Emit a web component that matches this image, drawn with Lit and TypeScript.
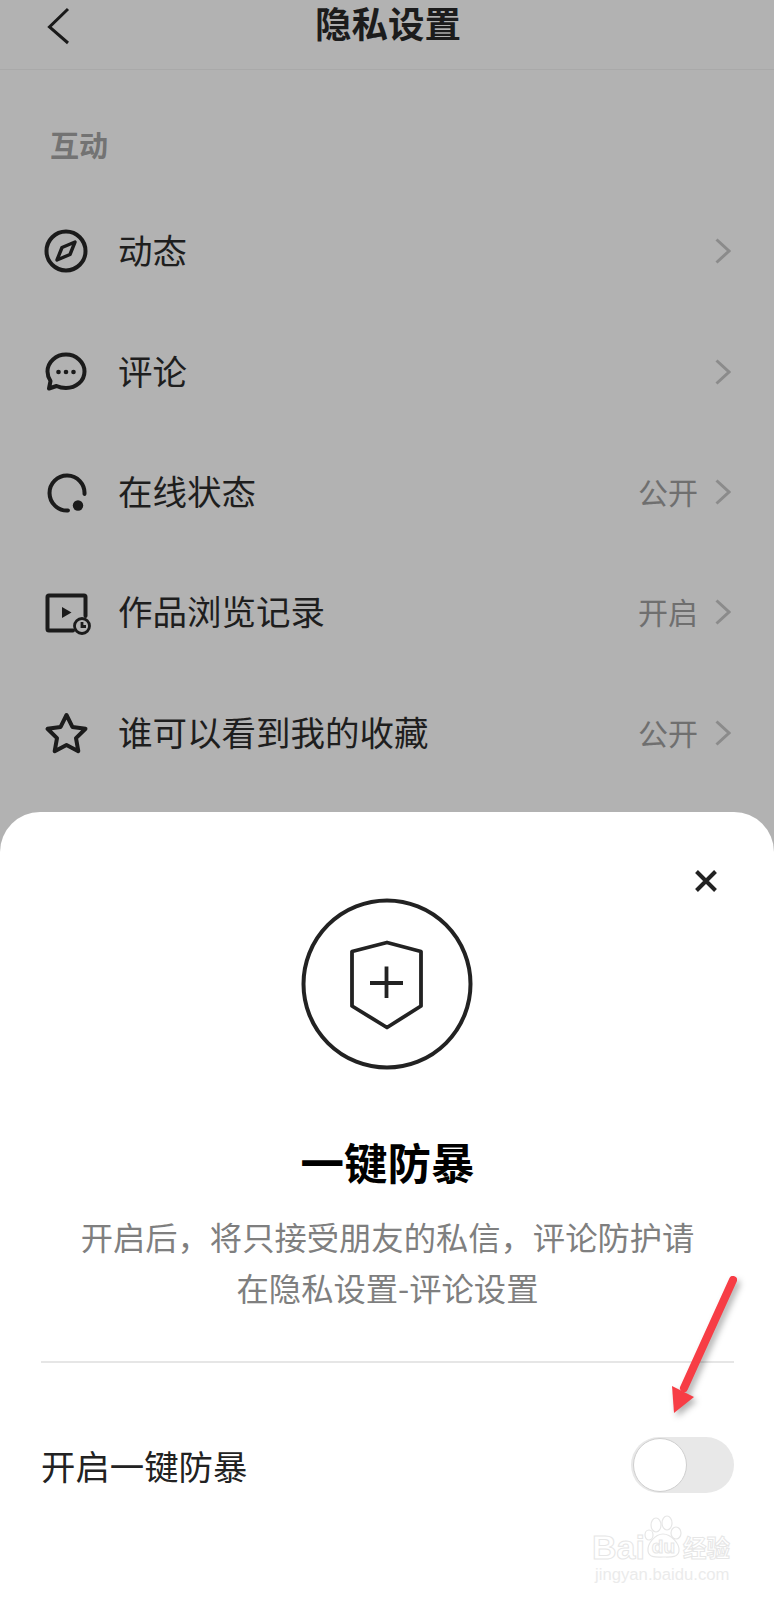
import { LitElement, html, css, svg } from "lit";
import { customElement } from "lit/decorators.js";

const chevron = html`<svg class="chev" viewBox="0 0 16 26"><path d="M1.5 1.5 L14 13 L1.5 24.5" /></svg>`;

const icons = {
  compass: svg`<circle cx="22" cy="22" r="19.5" class="s"/><path d="M31 13 L26 25.5 L13 31 L18 18.5 Z" class="s t"/>`,
  comment: svg`<path class="s" d="M22 4.5 C32 4.5 40.5 12 40.5 21.5 C40.5 31 32 38 22 38 C18.5 38 15 37.2 12.5 36 L5 38.5 L6.5 31 C4.5 28 3.5 25 3.5 21.5 C3.5 12 12 4.5 22 4.5 Z"/><circle cx="14.5" cy="22" r="2.3"/><circle cx="22" cy="22" r="2.3"/><circle cx="29.5" cy="22" r="2.3"/>`,
  status: svg`<path class="s" d="M24 40.5 A17.5 17.5 0 1 1 40.5 24"/><circle cx="34" cy="35.5" r="5.2"/>`,
  video: svg`<path class="s" d="M29 40.5 H5 a1.5 1.5 0 0 1 -1.5 -1.5 V7 a1.5 1.5 0 0 1 1.5 -1.5 H40 a1.5 1.5 0 0 1 1.5 1.5 V26"/><path d="M18 17 L27.5 22.5 L18 28 Z"/><circle class="t2" cx="38" cy="36" r="7.5"/><path class="t2" d="M38 32 V36.5 H42"/>`,
  star: svg`<path class="s" d="M22.5 4 L28.4 15.9 L41.5 17.8 L32 27.1 L34.3 40.2 L22.5 34 L10.7 40.2 L13 27.1 L3.5 17.8 L16.6 15.9 Z"/>`,
};

const rows: { icon: keyof typeof icons; label: string; value?: string }[] = [
  { icon: "compass", label: "动态" },
  { icon: "comment", label: "评论" },
  { icon: "status", label: "在线状态", value: "公开" },
  { icon: "video", label: "作品浏览记录", value: "开启" },
  { icon: "star", label: "谁可以看到我的收藏", value: "公开" },
];

@customElement("app-root")
export class AppRoot extends LitElement {
  static styles = css`
    :host {
      display: block;
      position: relative;
      width: 774px;
      height: 1600px;
      overflow: hidden;
      background: #b2b2b2;
      font-family: "Noto Sans CJK SC", "Noto Sans", sans-serif;
    }
    .back-layer { height: 812px; }
    .top {
      height: 69px;
      border-bottom: 1px solid #a9a9a9;
      display: flex;
      align-items: flex-start;
      padding-left: 47px;
    }
    .back { width: 24px; height: 38px; margin-top: 7px; flex: none; }
    .back path { fill: none; stroke: #1a1a1a; stroke-width: 3; }
    .title {
      flex: none;
      margin-left: 244px;
      font-size: 36.5px;
      line-height: 46px;
      font-weight: 700;
      color: #1c1c1c;
    }
    .section {
      margin: 54px 0 0 50px;
      height: 40px;
      line-height: 40px;
      font-size: 29px;
      font-weight: 700;
      color: #737373;
    }
    .list { margin-top: 27px; }
    .row {
      height: 120.4px;
      display: flex;
      align-items: center;
      padding: 0 43px 0 44px;
    }
    .ic { width: 44px; height: 44px; flex: none; overflow: visible; fill: #1b1b1b; }
    .ic .s { fill: none; stroke: #1b1b1b; stroke-width: 4; stroke-linejoin: round; stroke-linecap: round; }
    .ic .t { stroke-width: 3.4; }
    .ic .t2 { fill: none; stroke: #1b1b1b; stroke-width: 2.8; }
    .label {
      margin: 0 0 4px 30px;
      flex: 1;
      font-size: 34.5px;
      line-height: 44px;
      color: #1e1e1e;
    }
    .value { font-size: 30px; line-height: 40px; color: #6f6f6f; margin: 0 17px 2px 0; }
    .chev { width: 16px; height: 26px; flex: none; }
    .chev path { fill: none; stroke: #8b8b8b; stroke-width: 3; }
    .sheet {
      height: 788px;
      box-sizing: border-box;
      background: #fff;
      border-radius: 40px 40px 0 0;
      padding: 57px 40px 0 41px;
      display: flex;
      flex-direction: column;
    }
    .close-row { display: flex; justify-content: flex-end; padding-right: 16px; }
    .close { width: 24px; height: 24px; flex: none; }
    .close path { fill: none; stroke: #222; stroke-width: 4; }
    .shield { width: 172px; height: 172px; flex: none; align-self: center; margin-top: 5px; margin-right: 1px; }
    .shield * { fill: none; stroke: #222; }
    .sheet h2 {
      margin: 64px 0 0;
      text-align: center;
      font-size: 43.5px;
      line-height: 56px;
      font-weight: 700;
      color: #000;
    }
    .desc {
      margin: 21px 0 0;
      text-align: center;
      font-size: 32.3px;
      line-height: 51px;
      color: #7f7f7f;
    }
    .rule { height: 2px; background: #e6e6e6; margin-top: 48px; }
    .switch-row { display: flex; align-items: center; justify-content: space-between; margin-top: 74px; }
    .switch-label { font-size: 34.4px; line-height: 56px; color: #222; }
    .toggle {
      width: 103px;
      height: 56px;
      box-sizing: border-box;
      padding: 1px 2px;
      border-radius: 28px;
      background: #e8e8e8;
      flex: none;
    }
    .thumb {
      width: 54px;
      height: 54px;
      box-sizing: border-box;
      border-radius: 50%;
      background: #fff;
      border: 1px solid #cfcfcf;
    }
    .arrow { position: absolute; left: 660px; top: 1270px; width: 90px; height: 160px; overflow: visible; filter: drop-shadow(3px 4px 3px rgba(0,0,0,.3)); }
    .arrow path { fill: #f73d45; }
    .arrow .shaft { fill: none; stroke: #f73d45; stroke-width: 8; stroke-linecap: round; }
    .mark { position: absolute; left: 592px; top: 1529px; width: 146px; }
    .mark .big { position: relative; display: flex; align-items: center; white-space: nowrap; font-family: "Liberation Sans", sans-serif; font-size: 34px; line-height: 36px; font-weight: 700; color: transparent; -webkit-text-stroke: 1px #e6e6e6; }
    .mark .cn { font-family: "Noto Sans CJK SC", sans-serif; font-size: 23.5px; margin-left: 4px; }
    .mark .du { font-size: 19px; margin-left: 3px; width: 31px; text-align: center; }
    .mark .small { margin-left: 3px; font-family: "Liberation Sans", sans-serif; font-size: 16.7px; line-height: 20px; color: #ebebeb; white-space: nowrap; }
    .paw { position: absolute; left: 52px; top: -13px; width: 40px; height: 44px; overflow: visible; }
    .paw * { fill: #fff; stroke: #e6e6e6; stroke-width: 1.2; }
  `;

  render() {
    return html`
      <div class="back-layer">
        <div class="top">
          <svg class="back" viewBox="0 0 24 38"><path d="M21 2 L2.5 20 L21 36" /></svg>
          <div class="title">隐私设置</div>
        </div>
        <div class="section">互动</div>
        <div class="list">
          ${rows.map(
            (r) => html`<div class="row">
              <svg class="ic" viewBox="0 0 44 44">${icons[r.icon]}</svg>
              <div class="label">${r.label}</div>
              ${r.value ? html`<div class="value">${r.value}</div>` : ""}
              ${chevron}
            </div>`
          )}
        </div>
      </div>
      <div class="sheet">
        <div class="close-row">
          <svg class="close" viewBox="0 0 24 24"><path d="M2.5 2.5 L21.5 21.5 M21.5 2.5 L2.5 21.5" /></svg>
        </div>
        <svg class="shield" viewBox="0 0 172 172">
          <circle cx="86" cy="86" r="83.5" stroke-width="4" />
          <path stroke-width="3.8" stroke-linejoin="round" d="M86 44.5 L120 53.5 V108 L86 129.5 L51 108 V53.5 Z" />
          <path stroke-width="3.8" d="M69 85 H102 M85.5 68.5 V100" />
        </svg>
        <h2>一键防暴</h2>
        <p class="desc">开启后，将只接受朋友的私信，评论防护请<br />在隐私设置-评论设置</p>
        <div class="rule"></div>
        <div class="switch-row">
          <div class="switch-label">开启一键防暴</div>
          <div class="toggle"><div class="thumb"></div></div>
        </div>
      </div>
      <svg class="arrow" viewBox="0 0 90 160">
        <path class="shaft" d="M73 10 L24 118" />
        <path d="M14 143 L12 116 L34 127 Z" />
      </svg>
      <div class="mark">
        <svg class="paw" viewBox="0 0 40 44">
          <ellipse cx="5" cy="19" rx="4" ry="5" />
          <ellipse cx="12" cy="9" rx="5" ry="7" />
          <ellipse cx="23" cy="7" rx="5" ry="7" />
          <ellipse cx="32" cy="17" rx="5" ry="6" />
          <path d="M19 18 C27 18 36 28 35 35 C34 42 26 41 19 41 C12 41 5 42 4 35 C3 28 11 18 19 18 Z" />
        </svg>
        <div class="big"><span>Bai</span><span class="du">du</span><span class="cn">经验</span></div>
        <div class="small">jingyan.baidu.com</div>
      </div>
    `;
  }
}
